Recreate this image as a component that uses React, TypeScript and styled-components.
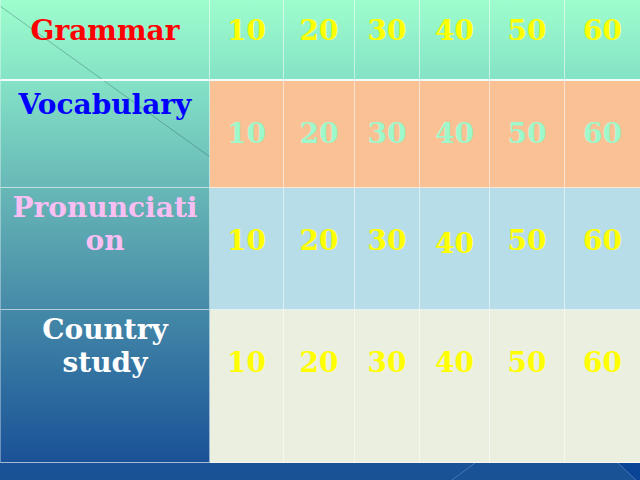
import React from "react";
import styled, { createGlobalStyle } from "styled-components";

const GlobalStyle = createGlobalStyle`
  html, body { margin: 0; padding: 0; }
  body { width: 640px; height: 480px; overflow: hidden; }
`;

const Page = styled.div`
  position: relative;
  width: 640px;
  height: 480px;
  overflow: hidden;
  background: linear-gradient(
    180deg,
    #9efdcd 0%,
    #84e2c6 17%,
    #69bab8 38%,
    #4e95ab 58%,
    #2f6ea0 80%,
    #1b5297 96%,
    #1a5296 100%
  );
  font-family: "DejaVu Serif", "Liberation Serif", serif;
  font-weight: bold;
`;

const Decor = styled.svg`
  position: absolute;
  inset: 0;
  pointer-events: none;
`;

const Table = styled.div`
  position: relative;
  display: grid;
  grid-template-columns: 210px 74px 71px 65px 70px 75px 75px;
  grid-template-rows: 81px 107px 122px 153px;
`;

const Label = styled.div<{ $color: string; $pad: number; $first?: boolean }>`
  box-sizing: border-box;
  padding: ${(p) => p.$pad}px 5px 0 5px;
  border-left: 1px solid rgba(255, 255, 255, 0.35);
  border-right: 1px solid rgba(255, 255, 255, 0.55);
  border-bottom: ${(p) =>
    p.$first ? "2px solid rgba(255,255,255,0.9)" : "1px solid rgba(255,255,255,0.6)"};
  color: ${(p) => p.$color};
  font-size: 28px;
  line-height: 33px;
  text-align: center;
  overflow-wrap: anywhere;
`;

const Cell = styled.div<{ $bg: string; $color: string; $pad: number; $first?: boolean; $last?: boolean }>`
  box-sizing: border-box;
  padding-top: ${(p) => p.$pad}px;
  background: ${(p) => p.$bg};
  border-right: ${(p) => (p.$last ? "none" : "1px solid rgba(255,255,255,0.55)")};
  border-bottom: ${(p) =>
    p.$first ? "2px solid rgba(255,255,255,0.9)" : "1px solid rgba(255,255,255,0.6)"};
  color: ${(p) => p.$color};
  font-size: 28px;
  line-height: 33px;
  text-align: center;
`;

type Row = {
  label: string;
  labelColor: string;
  labelPad: number;
  bg: string;
  numColor: string;
  numPad: number;
};

const rows: Row[] = [
  { label: "Grammar", labelColor: "#ff0000", labelPad: 14, bg: "transparent", numColor: "#ffff00", numPad: 14 },
  { label: "Vocabulary", labelColor: "#0000ff", labelPad: 7, bg: "#f9c194", numColor: "#9ef8cc", numPad: 36 },
  { label: "Pronunciation", labelColor: "#f9bff2", labelPad: 3, bg: "#b7dde8", numColor: "#ffff00", numPad: 36 },
  { label: "Country study", labelColor: "#ffffff", labelPad: 3, bg: "#eaefdf", numColor: "#ffff00", numPad: 36 },
];

const values = [10, 20, 30, 40, 50, 60];

export default function App() {
  return (
    <>
      <GlobalStyle />
      <Page>
        <Decor width="640" height="480" viewBox="0 0 640 480">
          <line x1="0" y1="6" x2="210" y2="157" stroke="rgba(40,80,80,0.35)" strokeWidth="1" />
          <polygon points="618,463 640,463 640,480 636,480" fill="rgba(0,60,150,0.6)" />
          <line x1="618" y1="463" x2="636" y2="480" stroke="rgba(120,160,210,0.5)" strokeWidth="1" />
          <line x1="452" y1="480" x2="475" y2="463" stroke="rgba(120,160,210,0.5)" strokeWidth="1" />
        </Decor>
        <Table>
          {rows.map((r, ri) => (
            <React.Fragment key={r.label}>
              <Label $color={r.labelColor} $pad={r.labelPad} $first={ri === 0}>
                {r.label}
              </Label>
              {values.map((v, ci) => (
                <Cell
                  key={v}
                  $bg={r.bg}
                  $color={r.numColor}
                  $pad={ri === 2 && v === 40 ? r.numPad + 3 : r.numPad}
                  $first={ri === 0}
                  $last={ci === values.length - 1}
                >
                  {v}
                </Cell>
              ))}
            </React.Fragment>
          ))}
        </Table>
      </Page>
    </>
  );
}
